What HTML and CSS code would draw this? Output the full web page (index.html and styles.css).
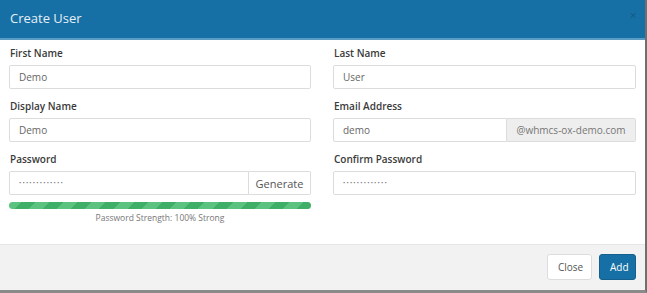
FILE: index.html
```html
<!DOCTYPE html>
<html lang="en">
<head>
    <meta charset="UTF-8">
    <title>Create User</title>
    <link rel="stylesheet" href="styles.css">
</head>
<body>
    <div class="modal">
        <div class="modal-header">
            <h4 class="modal-title">Create User</h4>
            <span class="close">&times;</span>
        </div>

        <div class="modal-body">
            <div class="form-grid">
                <div class="form-group">
                    <label>First Name</label>
                    <input class="form-control" type="text" value="Demo">
                </div>
                <div class="form-group">
                    <label>Last Name</label>
                    <input class="form-control" type="text" value="User">
                </div>
                <div class="form-group">
                    <label>Display Name</label>
                    <input class="form-control" type="text" value="Demo">
                </div>
                <div class="form-group">
                    <label>Email Address</label>
                    <div class="input-group">
                        <input class="form-control" type="text" value="demo">
                        <span class="addon">@whmcs-ox-demo.com</span>
                    </div>
                </div>
                <div class="form-group">
                    <label>Password</label>
                    <div class="input-group">
                        <input class="form-control dots" type="text" value="•••••••••••••">
                        <button class="btn-generate">Generate</button>
                    </div>
                    <div class="strength-bar"></div>
                    <div class="strength-text">Password Strength: 100% Strong</div>
                </div>
                <div class="form-group">
                    <label>Confirm Password</label>
                    <input class="form-control dots" type="text" value="•••••••••••••">
                </div>
            </div>
        </div>

        <div class="modal-footer">
            <button class="btn btn-default">Close</button>
            <button class="btn btn-primary">Add</button>
        </div>
    </div>
</body>
</html>
```

FILE: styles.css
```css
:root {
    --blue: #1670a5;
    --border: #dcdcdc;
    --text: #666;
    --label: #3a3a3a;
}

* {
    margin: 0;
    padding: 0;
    box-sizing: border-box;
}

body {
    font-family: "Open Sans", sans-serif;
    background: #fff;
    width: 647px;
    height: 293px;
    overflow: hidden;
}

.modal {
    width: 647px;
    height: 293px;
    border-right: 2px solid #6f6f6f;
    border-bottom: 3px solid #8a8a8a;
    display: flex;
    flex-direction: column;
}

.modal-header {
    height: 40px;
    background-color: var(--blue);
    border-bottom: 2px solid #5b9cc4;
    display: flex;
    align-items: center;
    justify-content: space-between;
    padding: 0 8px 2px 10px;
}

.modal-title {
    font-size: 13px;
    font-weight: 400;
    color: #e6eff6;
}

.close {
    font-size: 13px;
    color: rgba(0, 0, 0, 0.22);
    margin-top: -6px;
}

.modal-body {
    flex: 1;
    padding: 7px 9px 0 9px;
}

.form-grid {
    display: grid;
    grid-template-columns: 302px 303px;
    column-gap: 22px;
}

.form-group {
    margin-bottom: 11px;
}

.form-group label {
    display: block;
    font-size: 10px;
    font-weight: 600;
    color: var(--label);
    line-height: 13px;
    margin: 0 0 5px 1px;
}

.form-control {
    display: block;
    width: 100%;
    height: 24px;
    border: 1px solid var(--border);
    border-radius: 2px;
    padding: 0 9px;
    font-family: "Open Sans", sans-serif;
    font-size: 10px;
    color: var(--text);
    background: #fff;
    outline: none;
}

.form-control.dots {
    font-size: 6px;
    letter-spacing: 1.2px;
    color: #777;
}

.input-group {
    display: flex;
}

.input-group .form-control {
    flex: 1;
    border-radius: 2px 0 0 2px;
}

.addon {
    width: 129px;
    height: 24px;
    display: flex;
    align-items: center;
    justify-content: center;
    background-color: #eee;
    border: 1px solid var(--border);
    border-left: none;
    border-radius: 0 2px 2px 0;
    font-size: 10px;
    color: #777;
}

.btn-generate {
    width: 62px;
    height: 24px;
    background: #fff;
    border: 1px solid var(--border);
    border-left: none;
    border-radius: 0 2px 2px 0;
    font-family: "Open Sans", sans-serif;
    font-size: 11px;
    color: #555;
}

.strength-bar {
    height: 7px;
    margin-top: 7px;
    border-radius: 4px;
    background: repeating-linear-gradient(
        -45deg,
        #3fae66 0,
        #3fae66 10px,
        #5cc27f 10px,
        #5cc27f 20px
    );
}

.strength-text {
    text-align: center;
    font-size: 8.5px;
    color: #777;
    margin-top: 3px;
}

.modal-footer {
    height: 46px;
    background-color: #f2f2f2;
    border-top: 1px solid #e6e6e6;
    display: flex;
    justify-content: flex-end;
    align-items: center;
    gap: 7px;
    padding: 0 9px 2px 0;
}

.btn {
    height: 26px;
    border-radius: 3px;
    font-family: "Open Sans", sans-serif;
    font-size: 10px;
    padding: 0 10px;
}

.btn-default {
    background: #fff;
    border: 1px solid #ddd;
    color: #555;
    width: 45px;
}

.btn-primary {
    background: var(--blue);
    border: 1px solid #145f8d;
    color: #fff;
    width: 37px;
}
```
